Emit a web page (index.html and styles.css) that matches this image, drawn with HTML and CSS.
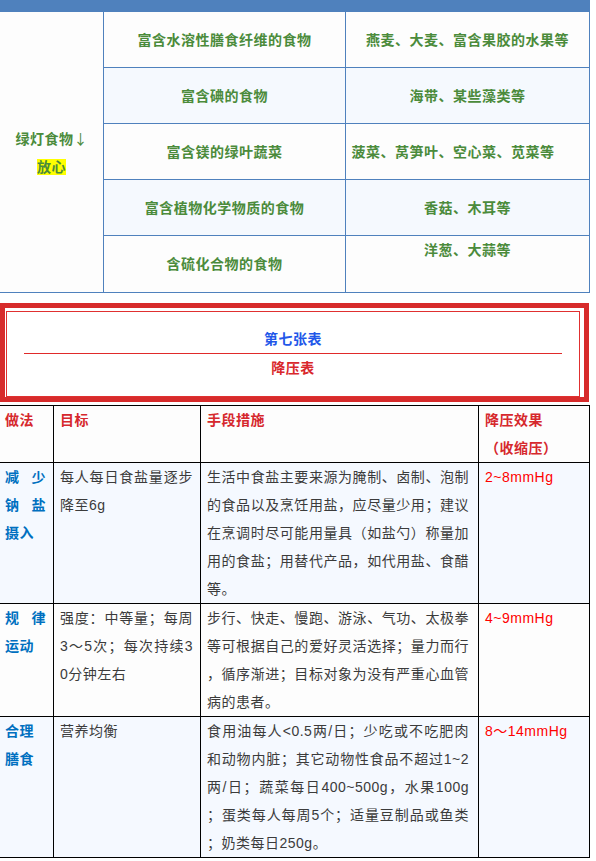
FILE: index.html
```html
<!DOCTYPE html>
<html lang="zh-CN">
<head>
<meta charset="utf-8">
<title>降压表</title>
<link rel="stylesheet" href="styles.css">
</head>
<body>
<div class="page">
  <table class="food">
    <colgroup><col class="f1"><col class="f2"><col class="f3"></colgroup>
    <tr class="band"><td colspan="3"></td></tr>
    <tr>
      <td rowspan="5" class="cat">绿灯食物<span class="arrow">↓</span><br><span class="mark">放心</span></td>
      <td>富含水溶性膳食纤维的食物</td>
      <td>燕麦、大麦、富含果胶的水果等</td>
    </tr>
    <tr class="alt">
      <td>富含碘的食物</td>
      <td>海带、某些藻类等</td>
    </tr>
    <tr>
      <td>富含镁的绿叶蔬菜</td>
      <td><span class="nudge">菠菜、莴笋叶、空心菜、苋菜等</span></td>
    </tr>
    <tr class="alt">
      <td>富含植物化学物质的食物</td>
      <td>香菇、木耳等</td>
    </tr>
    <tr class="last">
      <td>含硫化合物的食物</td>
      <td class="top">洋葱、大蒜等</td>
    </tr>
  </table>

  <section class="caption-box">
    <div class="caption-inner">
      <p class="caption-no">第七张表</p>
      <hr class="caption-rule">
      <p class="caption-title">降压表</p>
    </div>
  </section>

  <table class="bp">
    <colgroup><col class="b1"><col class="b2"><col class="b3"><col class="b4"></colgroup>
    <thead>
      <tr>
        <th class="way-h">做法</th>
        <th>目标</th>
        <th class="means">手段措施</th>
        <th>降压效果<br>（收缩压）</th>
      </tr>
    </thead>
    <tbody>
      <tr class="alt">
        <td class="way">减少钠盐摄入</td>
        <td>每人每日食盐量逐步降至6g</td>
        <td class="means">生活中食盐主要来源为腌制、卤制、泡制的食品以及烹饪用盐，应尽量少用；建议在烹调时尽可能用量具（如盐勺）称量加用的食盐；用替代产品，如代用盐、食醋等。</td>
        <td class="effect">2~8mmHg</td>
      </tr>
      <tr>
        <td class="way">规律运动</td>
        <td>强度：中等量；每周3～5次；每次持续30分钟左右</td>
        <td class="means">步行、快走、慢跑、游泳、气功、太极拳等可根据自己的爱好灵活选择；量力而行，循序渐进；目标对象为没有严重心血管病的患者。</td>
        <td class="effect">4~9mmHg</td>
      </tr>
      <tr class="alt">
        <td class="way">合理<br>膳食</td>
        <td>营养均衡</td>
        <td class="means">食用油每人&lt;0.5两/日；少吃或不吃肥肉和动物内脏；其它动物性食品不超过1~2两/日；蔬菜每日400~500g，水果100g；蛋类每人每周5个；适量豆制品或鱼类；奶类每日250g。</td>
        <td class="effect">8～14mmHg</td>
      </tr>
    </tbody>
  </table>
</div>
</body>
</html>
```

FILE: styles.css
```css
html, body {
  margin: 0;
  padding: 0;
  background: #ffffff;
}

body {
  font-family: "Liberation Sans", "Noto Sans CJK SC", sans-serif;
  font-size: 14px;
  letter-spacing: 0.5px;
  text-spacing-trim: space-all;
}

.page {
  width: 589px;
}

table {
  border-collapse: collapse;
  table-layout: fixed;
  width: 590px;
  margin-left: -1px;
}

/* top table: green light foods */
.food col.f1 { width: 104px; }
.food col.f2 { width: 242px; }
.food col.f3 { width: 244px; }

.food td {
  border: 1px solid #4f81bd;
  height: 55px;
  padding: 0 3px;
  text-align: center;
  vertical-align: middle;
  line-height: 28px;
  color: #4b8b3b;
  font-weight: 700;
  background: #fdfdfd;
}

.food .band td {
  height: 10px;
  padding: 0;
  background: #4f81bd;
}

.food .alt td {
  background: #f5f9fe;
}

.food .last td {
  height: 56px;
}

.food td.top {
  vertical-align: top;
}

.arrow {
  font-family: "Noto Sans CJK SC", sans-serif;
  font-weight: 400;
  letter-spacing: 0;
}

.mark {
  background: #ffff00;
}

.nudge {
  padding-right: 29px;
}

/* caption box */
.caption-box {
  margin: 10px 0 3px;
  border: 5px solid #d72b2b;
  padding: 3px 4px 0 1px;
}

.caption-inner {
  border: 1px solid #e03030;
  padding: 13px 0 14px;
  text-align: center;
  font-weight: 700;
  line-height: 28px;
}

.caption-no {
  margin: 0;
  color: #2257e9;
}

.caption-rule {
  margin: 0 17px;
  height: 0;
  border: 0;
  border-top: 1px solid #e02a2a;
}

.caption-title {
  margin: 0;
  color: #d9282c;
}

/* blood pressure table */
.bp col.b1 { width: 54px; }
.bp col.b2 { width: 147px; }
.bp col.b3 { width: 278px; }
.bp col.b4 { width: 111px; }

.bp th,
.bp td {
  border: 1px solid #000000;
  padding: 0 7px 0 6px;
  line-height: 28px;
  vertical-align: top;
  text-align: justify;
  word-break: break-all;
  line-break: anywhere;
  color: #3b3b3b;
  font-weight: 400;
  background: #fdfdfd;
}

.bp th {
  color: #d6282d;
  font-weight: 700;
  text-align: left;
}

.bp .alt td {
  background: #f5f9ff;
}

.bp .way,
.bp .way-h {
  padding: 0 7px 0 5px;
}

.bp td.way {
  color: #0070c0;
  font-weight: 700;
}

.bp .means {
  padding: 0 9px 0 6px;
}

.bp td.effect {
  color: #ff0000;
  text-align: left;
}
```
